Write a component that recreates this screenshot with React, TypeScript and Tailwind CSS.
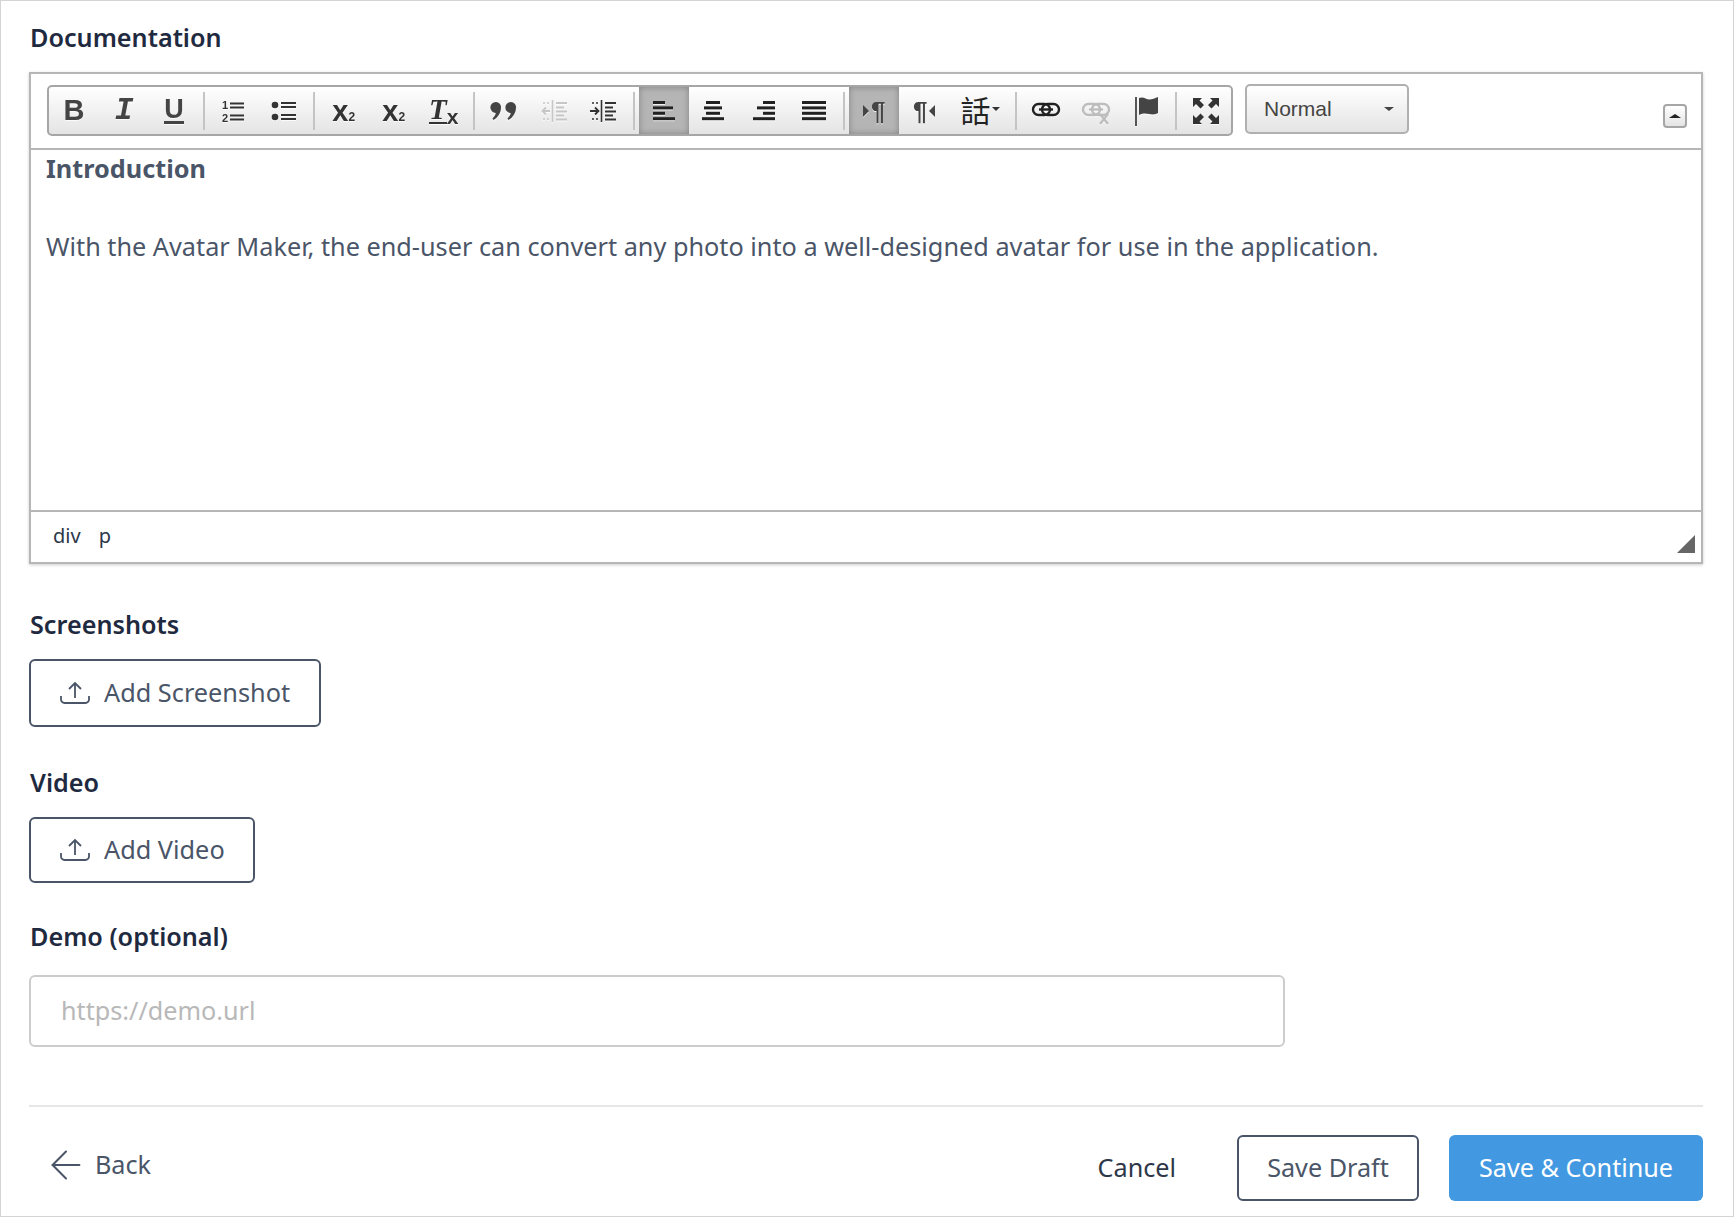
import type { ReactNode } from "react";
import { ArrowLeft } from "lucide-react";

const iconShadow = "[filter:drop-shadow(0_1px_0_rgba(255,255,255,0.8))]";

function ToolButton({ children, active, wide }: { children: ReactNode; active?: boolean; wide?: boolean }) {
  return (
    <div
      className={`relative flex h-full items-center justify-center ${wide ? "w-[62px]" : "w-[50px]"} ${
        active ? "bg-[#b5b5b5] shadow-[inset_0_0_6px_#7f7f7f]" : ""
      }`}
    >
      {children}
    </div>
  );
}

function Sep({ wide }: { wide?: boolean }) {
  return (
    <div className={`flex h-full items-center justify-center ${wide ? "w-[11px]" : "w-[10px]"}`}>
      <div className="h-[38px] w-[2px] bg-[#c4c4c4]" />
    </div>
  );
}

function Bars({ rows, color = "#222" }: { rows: [number, number][]; color?: string }) {
  return (
    <svg width="26" height="24" viewBox="0 0 26 24" className={iconShadow}>
      {rows.map(([x, w], i) => (
        <rect key={i} x={x} y={2 + i * 5.4} width={w} height="3" fill={color} />
      ))}
    </svg>
  );
}

function ListIcon({ numbered }: { numbered?: boolean }) {
  return (
    <svg width="28" height="26" viewBox="0 0 28 26" className={iconShadow}>
      {numbered ? (
        <>
          <text x="2" y="11" fontSize="11" fontFamily="Liberation Sans" fontWeight="700" fill="#333">1</text>
          <text x="2" y="24" fontSize="11" fontFamily="Liberation Sans" fontWeight="700" fill="#333">2</text>
          <path d="M10 5.500h14M10 9.500h14M10 17.500h14M10 21.500h14" stroke="#333" strokeWidth="2" />
        </>
      ) : (
        <>
          <circle cx="5" cy="7" r="3.3" fill="#333" />
          <circle cx="5" cy="19" r="3.3" fill="#333" />
          <path d="M11 5h15M11 9h15M11 17h15M11 21h15" stroke="#333" strokeWidth="2" />
        </>
      )}
    </svg>
  );
}

function Subscript() {
  return (
    <span className={`flex items-end font-['Liberation_Sans',sans-serif] font-bold text-[#333] ${iconShadow}`}>
      <span className="text-[29px] leading-[24px]">x</span>
      <span className="text-[12px] leading-[12px]">2</span>
    </span>
  );
}

function QuoteIcon() {
  return (
    <svg width="28" height="20" viewBox="0 0 28 20" className={iconShadow}>
      <g fill="#444">
        <path d="M6 1a5 5 0 0 1 5 5.500C11 12 7.500 17 3.500 19L2.500 17.500C4.500 15.500 5.500 14 5.700 12A5.500 5.500 0 0 1 6 1z" />
        <path d="M21 1a5 5 0 0 1 5 5.500C26 12 22.500 17 18.500 19L17.500 17.500C19.500 15.500 20.500 14 20.700 12A5.500 5.500 0 0 1 21 1z" />
      </g>
    </svg>
  );
}

function IndentIcon({ faded, outdent }: { faded?: boolean; outdent?: boolean }) {
  const c = faded ? "#c6c6c6" : "#333";
  return (
    <svg width="28" height="26" viewBox="0 0 28 26" className={iconShadow}>
      <path d="M12.500 2v22" stroke={c} strokeWidth="1.600" />
      <path d="M16 5h11M16 9.500h8M16 13.500h11M16 17.500h8M16 21.500h11" stroke={c} strokeWidth="2" />
      <path d="M3 5h2M7 5h2M3 21h2M7 21h2" stroke={c} strokeWidth="1.600" />
      {outdent ? (
        <path d="M10 13H3M6 9.500l-3.500 3.500 3.500 3.500" stroke={c} strokeWidth="1.800" fill="none" />
      ) : (
        <path d="M1 13h8M6 9.500l3.500 3.500-3.500 3.500" stroke={c} strokeWidth="1.800" fill="none" />
      )}
    </svg>
  );
}

function Pilcrow({ side }: { side: "left" | "right" }) {
  return (
    <span className={`flex items-center gap-[2px] text-[#444] ${iconShadow}`}>
      {side === "left" && <span className="h-0 w-0 border-y-[6px] border-l-[6px] border-y-transparent border-l-[#444]" />}
      <span className="font-['Liberation_Sans',sans-serif] text-[26px] leading-none font-bold">¶</span>
      {side === "right" && <span className="h-0 w-0 border-y-[6px] border-r-[6px] border-y-transparent border-r-[#444]" />}
    </span>
  );
}

function LinkIcon({ broken }: { broken?: boolean }) {
  const c = broken ? "#bdbdbd" : "#222";
  return (
    <svg width="30" height="28" viewBox="0 0 30 28" className={iconShadow}>
      <rect x="2" y="7" width="17" height="11" rx="5.500" fill="none" stroke={c} strokeWidth="2.400" />
      <rect x="11" y="7" width="17" height="11" rx="5.500" fill="none" stroke={c} strokeWidth="2.400" />
      <path d="M8 12.500h14" stroke={c} strokeWidth="2.400" />
      {broken && <path d="M19 17l8 10M27 17l-8 10" stroke={c} strokeWidth="2.400" />}
    </svg>
  );
}

function Toolbar() {
  return (
    <div className="flex h-[51px] w-[1186px] items-stretch overflow-hidden rounded-[5px] border-2 border-[#a6a6a6] bg-gradient-to-b from-white to-[#e4e4e4]">
      <ToolButton>
        <span className={`font-['Liberation_Sans',sans-serif] text-[29px] leading-none font-bold text-[#444] ${iconShadow}`}>B</span>
      </ToolButton>
      <ToolButton>
        <span className={`font-['Liberation_Mono',monospace] text-[31px] leading-none font-bold text-[#444] italic ${iconShadow}`}>I</span>
      </ToolButton>
      <ToolButton>
        <span className={`border-b-[3px] border-[#444] font-['Liberation_Sans',sans-serif] text-[27px] leading-[24px] font-bold text-[#444] ${iconShadow}`}>U</span>
      </ToolButton>
      <Sep />
      <ToolButton><ListIcon numbered /></ToolButton>
      <ToolButton><ListIcon /></ToolButton>
      <Sep />
      <ToolButton><Subscript /></ToolButton>
      <ToolButton><Subscript /></ToolButton>
      <ToolButton>
        <span className={`flex items-end font-['Liberation_Serif',serif] font-bold text-[#333] ${iconShadow}`}>
          <span className="border-b-[2px] border-[#333] text-[29px] leading-[25px] italic">T</span>
          <span className="font-['Liberation_Sans',sans-serif] text-[21px] leading-[15px]">x</span>
        </span>
      </ToolButton>
      <Sep />
      <ToolButton><QuoteIcon /></ToolButton>
      <ToolButton><IndentIcon faded outdent /></ToolButton>
      <ToolButton><IndentIcon /></ToolButton>
      <Sep wide />
      <ToolButton active><Bars rows={[[2, 12], [2, 20], [2, 12], [2, 22]]} /></ToolButton>
      <ToolButton><Bars rows={[[5, 14], [3, 18], [5, 14], [1, 22]]} /></ToolButton>
      <ToolButton><Bars rows={[[12, 12], [6, 18], [12, 12], [2, 22]]} /></ToolButton>
      <ToolButton><Bars rows={[[1, 24], [1, 24], [1, 24], [1, 24]]} /></ToolButton>
      <Sep />
      <ToolButton active><Pilcrow side="left" /></ToolButton>
      <ToolButton><Pilcrow side="right" /></ToolButton>
      <ToolButton wide>
        <span className="flex -translate-y-[2px] items-center gap-[1px]">
          <span className="font-['Noto_Sans_CJK_TC','Noto_Sans_CJK_SC',sans-serif] text-[30px] leading-none text-[#222]">話</span>
          <span className="h-0 w-0 border-x-[4px] border-t-[4px] border-x-transparent border-t-[#333]" />
        </span>
      </ToolButton>
      <Sep />
      <ToolButton><LinkIcon /></ToolButton>
      <ToolButton><LinkIcon broken /></ToolButton>
      <ToolButton>
        <svg width="28" height="32" viewBox="0 0 28 32" className={`translate-x-[1px] ${iconShadow}`}>
          <path d="M3 2v29" stroke="#444" strokeWidth="1.800" />
          <path d="M6 3c5-2 7 2 11 1.500S22 3 25 2v16c-4 2-6 1.500-9 1s-6-1-10 1z" fill="#444" />
        </svg>
      </ToolButton>
      <Sep />
      <ToolButton>
        <svg width="28" height="28" viewBox="0 0 28 28" className={iconShadow}>
          <path
            fill="#333"
            d="M1 1h9L7.500 3.500 12 8l-3.500 3.500L4 7l-3 3zM27 1v9l-3-3-4.500 4.500L16 8l4.500-4.500L18 1zM1 27v-9l3 3 4.500-4.500L12 20l-4.500 4.500L10 27zM27 27h-9l2.500-2.500L16 20l3.500-3.500L24 21l3-3z"
          />
        </svg>
      </ToolButton>
    </div>
  );
}

function Editor() {
  return (
    <div className="flex h-[492px] w-[1674px] flex-col border-2 border-[#b6b6b6] shadow-[0_1px_3px_rgba(0,0,0,0.2)]">
      <div className="flex h-[76px] items-start border-b-2 border-[#b6b6b6] pt-[11px] pl-[16px]">
        <Toolbar />
        <div className="-mt-[1px] ml-[12px] flex h-[50px] w-[164px] items-center justify-between rounded-[5px] border-2 border-[#b0b0b0] bg-gradient-to-b from-white to-[#e4e4e4] pr-[13px] pl-[17px] font-['Liberation_Sans',sans-serif] text-[21px] text-[#444]">
          Normal
          <span className="h-0 w-0 border-x-[5px] border-t-[4px] border-x-transparent border-t-[#444]" />
        </div>
        <div className="mt-[19px] ml-[254px] flex h-[24px] w-[24px] items-center justify-center rounded-[4px] border-2 border-[#a6a6a6] bg-gradient-to-b from-white to-[#e4e4e4]">
          <span className="h-0 w-0 border-x-[6px] border-b-[4px] border-x-transparent border-b-[#222]" />
        </div>
      </div>
      <div className="flex-1 pl-[15px] text-[25.27px] text-[#4a5568]">
        <p className="h-[36px] leading-[36px] font-bold">Introduction</p>
        <p className="mt-[42px] leading-[36px]">
          With the Avatar Maker, the end-user can convert any photo into a well-designed avatar for use in the application.
        </p>
      </div>
      <div className="relative flex h-[52px] items-center gap-[18px] border-t-2 border-[#b6b6b6] pb-[2px] pl-[22px] text-[20px] text-[#2d3748]">
        <span>div</span>
        <span>p</span>
        <svg width="18" height="18" viewBox="0 0 18 18" className="absolute right-[6px] bottom-[9px]">
          <path d="M18 0v18H0z" fill="#666" />
        </svg>
      </div>
    </div>
  );
}

function Label({ children, className = "" }: { children: ReactNode; className?: string }) {
  return <div className={`h-[32px] pl-[1px] text-[25.2px] leading-[32px] font-semibold text-[#1f2a40] ${className}`}>{children}</div>;
}

function UploadButton({ label, className }: { label: string; className: string }) {
  return (
    <button
      type="button"
      className={`flex items-center rounded-[6px] border-2 border-[#4a5568] pl-[28px] text-[25.3px] text-[#4a5568] ${className}`}
    >
      <svg width="32" height="24" viewBox="0 0 32 24" fill="none" stroke="#4a5568" strokeWidth="1.800" className="mr-[13px]">
        <path d="M2 15v3.500A3.500 3.500 0 0 0 5.500 22h21a3.500 3.500 0 0 0 3.500-3.500V15" />
        <path d="M16 17V2M10 8l6-6 6 6" />
      </svg>
      {label}
    </button>
  );
}

export default function App() {
  return (
    <div className="box-border h-[1217px] w-[1734px] overflow-hidden border border-[#d4d4d4] bg-white pt-[20px] pr-[29px] pl-[28px] font-['Noto_Sans','Open_Sans',sans-serif]">
      <Label>Documentation</Label>
      <div className="mt-[19px]">
        <Editor />
      </div>
      <Label className="mt-[44px]">Screenshots</Label>
      <UploadButton label="Add Screenshot" className="mt-[19px] h-[68px] w-[292px]" />
      <Label className="mt-[39px]">Video</Label>
      <UploadButton label="Add Video" className="mt-[19px] h-[66px] w-[226px]" />
      <Label className="mt-[37px]">Demo (optional)</Label>
      <div className="mt-[23px] flex h-[72px] w-[1256px] items-center rounded-[6px] border-2 border-[#cccccc] pl-[30px] text-[25.2px] text-[#b8b8b8]">
        https://demo.url
      </div>
      <div className="mt-[58px] h-[2px] w-[1674px] bg-[#e6e6e6]" />
      <div className="mt-[28px] flex h-[66px] w-[1674px] items-center justify-between">
        <div className="flex -translate-y-[3px] items-center pl-[14px] text-[25.2px] text-[#4a5568]">
          <ArrowLeft size={46} strokeWidth={1.050} className="mr-[6px]" />
          Back
        </div>
        <div className="flex h-full items-center text-[25.2px]">
          <span className="mr-[61px] text-[#2d3748]">Cancel</span>
          <button type="button" className="mr-[30px] h-full w-[182px] rounded-[6px] border-2 border-[#4a5568] text-[#4a5568]">
            Save Draft
          </button>
          <button type="button" className="h-full w-[254px] rounded-[6px] bg-[#4299e1] text-white">
            Save &amp; Continue
          </button>
        </div>
      </div>
    </div>
  );
}
